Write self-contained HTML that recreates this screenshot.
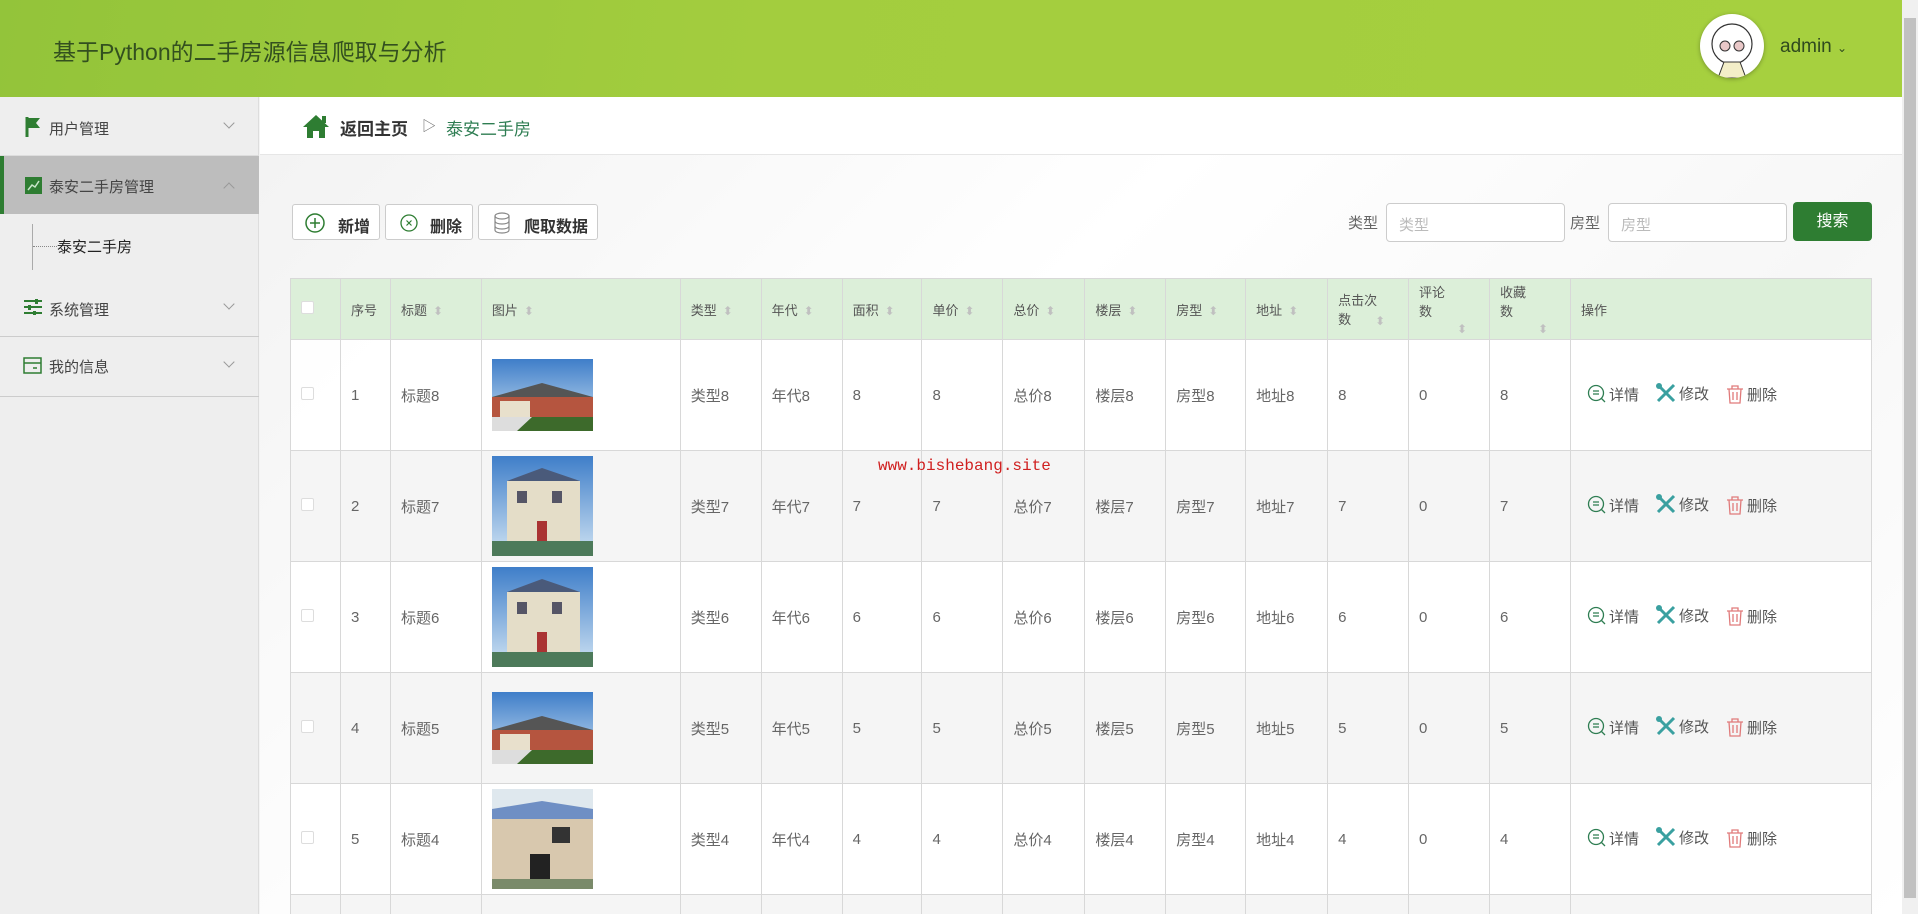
<!DOCTYPE html>
<html style="width:1918px;height:914px;overflow:hidden"><head><meta charset="utf-8">
<style>
*{margin:0;padding:0;box-sizing:border-box}
body{width:1918px;height:914px;overflow:hidden;font-family:"Liberation Sans","Noto Sans CJK SC",sans-serif;background:#f4f4f4;color:#606266}
#root{position:relative;width:1918px;height:914px;overflow:hidden}
.hdr{position:absolute;left:0;top:0;width:1902px;height:97px;background:linear-gradient(100deg,#93c43a 0%,#a3cd3e 40%,#a6d03f 100%)}
.hdr .t{position:absolute;left:53px;top:33px;font-size:23px;color:#33501f}
.av{position:absolute;left:1700px;top:14px;width:64px;height:64px;border-radius:50%;background:#fff;box-shadow:0 1px 4px rgba(0,0,0,.3);overflow:hidden}
.adm{position:absolute;left:1780px;top:36px;font-size:19px;color:#2f4a1e}
.sb{position:absolute;right:0;top:0;width:16px;height:914px;background:#f0f0f0}
.sb div{position:absolute;left:2px;top:18px;width:12px;height:880px;background:#c1c1c1}
.side{position:absolute;left:0;top:97px;width:259px;height:817px;background:#eeeeee;border-right:1px solid #ddd}
.mi{position:absolute;left:0;width:259px;font-size:15px;color:#444;}
.mi span{position:absolute;left:49px}
.mi .ar{position:absolute;left:225px;width:8px;height:8px;border-right:1px solid #999;border-bottom:1px solid #999;transform:rotate(45deg)}
.main{position:absolute;left:260px;top:97px;width:1642px;height:817px;background:linear-gradient(135deg,#f2f2f2,#fff 40%,#f7f7f7 70%,#fff)}
.bc{position:absolute;left:260px;top:97px;width:1642px;height:58px;background:#fff;border-bottom:1px solid #e6e6e6}
.btn{position:absolute;top:204px;height:36px;border:1px solid #ccc;border-radius:3px;background:#fff;font-size:16px;font-weight:bold;color:#333}
.inp{position:absolute;top:203px;height:39px;border:1px solid #ccc;border-radius:4px;background:#fff;font-size:15px;color:#bbb;padding:10px 12px}
.tw{position:absolute;left:290px;top:278px;width:1582px;height:636px;overflow:hidden}
table{border-collapse:collapse;font-size:15px;color:#666;table-layout:fixed}
td,th{border:1px solid #d8d8d8;padding:0 10px;text-align:left;vertical-align:middle}
th{height:61px;background:#dcefd9;font-weight:normal;font-size:13px;color:#555}
td{height:111px}
tr.g td{background:#f5f5f5}
tr.w td{background:rgba(255,255,255,.9)}
.s{display:inline-block;margin-left:6px;color:#c0c0c0;font-size:12px;vertical-align:middle}
.cb{display:inline-block;width:13px;height:13px;border:1px solid #ddd;border-radius:2px;background:#fff}
.act{font-size:15px;color:#555;white-space:nowrap}
.act i{font-style:normal;margin-right:16px;display:inline-flex;align-items:center;gap:2px}
</style></head><body><div id="root">
<div class="hdr"><div class="t">基于Python的二手房源信息爬取与分析</div>
<div class="av"><svg width="64" height="64"><circle cx="32" cy="30" r="20" fill="none" stroke="#333" stroke-width="1.2"/><circle cx="25" cy="32" r="5" fill="#e9c8c8" stroke="#333"/><circle cx="39" cy="32" r="5" fill="#e9c8c8" stroke="#333"/><path d="M18 64 L24 48 L40 48 L46 64Z" fill="#f3eec8" stroke="#333"/></svg></div>
<div class="adm">admin <span style="font-size:12px">&#8964;</span></div></div>
<div class="sb"><div></div></div>
<div class="side">
 <div class="mi" style="top:0;height:59px;border-bottom:1px solid #ddd"><svg style="position:absolute;left:25px;top:20px" width="16" height="20"><path d="M2 0V20" stroke="#2e7d32" stroke-width="3"/><path d="M3 1H15L11 6L15 11H3Z" fill="#2e7d32"/></svg><span style="top:21px">用户管理</span><b class="ar" style="top:22px"></b></div>
 <div class="mi" style="top:59px;height:58px;background:#bdbdbd;border-left:4px solid #2e7d32"><svg style="position:absolute;left:21px;top:21px" width="17" height="17"><rect width="17" height="17" fill="#2e7d32"/><path d="M3 13L7 8L10 10L14 4" stroke="#c8e6c9" stroke-width="1.5" fill="none"/></svg><span style="top:20px;left:45px">泰安二手房管理</span><b class="ar" style="top:28px;left:221px;transform:rotate(225deg)"></b></div>
 <div class="mi" style="top:117px;height:63px"><div style="position:absolute;left:32px;top:10px;width:1px;height:46px;background:#aaa"></div><div style="position:absolute;left:33px;top:32px;width:24px;border-top:1px dotted #888"></div><span style="top:22px;left:57px;color:#222">泰安二手房</span></div>
 <div class="mi" style="top:180px;height:60px;border-bottom:1px solid #ccc"><svg style="position:absolute;left:24px;top:22px" width="18" height="16"><path d="M0 2H18M0 8H18M0 14H18" stroke="#2e7d32" stroke-width="2"/><rect x="11" y="0" width="3" height="5" fill="#2e7d32"/><rect x="4" y="6" width="3" height="5" fill="#2e7d32"/><rect x="9" y="12" width="3" height="4" fill="#2e7d32"/></svg><span style="top:22px">系统管理</span><b class="ar" style="top:23px"></b></div>
 <div class="mi" style="top:240px;height:60px;border-bottom:1px solid #ccc"><svg style="position:absolute;left:23px;top:20px" width="19" height="17"><rect x="1" y="1" width="17" height="15" fill="none" stroke="#2e7d32" stroke-width="1.5"/><path d="M1 6H18" stroke="#2e7d32" stroke-width="1.5"/><path d="M10 11H14" stroke="#2e7d32" stroke-width="1.5"/></svg><span style="top:19px">我的信息</span><b class="ar" style="top:21px"></b></div>
</div>
<div class="main"></div>
<div class="bc"><svg style="position:absolute;left:42px;top:17px" width="28" height="24"><path d="M14 1L1 13H5V24H11V17H17V24H23V13H27Z" fill="#2e7d32"/><rect x="20" y="2" width="4" height="7" fill="#2e7d32"/></svg>
<span style="position:absolute;left:80px;top:18px;font-size:17px;font-weight:bold;color:#333">返回主页</span>
<span style="position:absolute;left:162px;top:19px;font-size:14px;color:#666">▷</span>
<span style="position:absolute;left:186px;top:18px;font-size:17px;color:#2e7d52">泰安二手房</span></div>

<div class="btn" style="left:292px;width:88px"><svg style="position:absolute;left:12px;top:8px" width="20" height="20"><circle cx="10" cy="10" r="9" fill="none" stroke="#2e7d32" stroke-width="1.5"/><path d="M10 5V15M5 10H15" stroke="#2e7d32" stroke-width="1.5"/></svg><span style="position:absolute;left:45px;top:8px">新增</span></div>
<div class="btn" style="left:385px;width:88px"><svg style="position:absolute;left:14px;top:9px" width="18" height="18"><circle cx="9" cy="9" r="8" fill="none" stroke="#2e7d32" stroke-width="1.3"/><path d="M6.5 6.5L11.5 11.5M11.5 6.5L6.5 11.5" stroke="#2e7d32" stroke-width="1.2"/></svg><span style="position:absolute;left:44px;top:8px">删除</span></div>
<div class="btn" style="left:478px;width:120px"><svg style="position:absolute;left:14px;top:7px" width="18" height="22"><ellipse cx="9" cy="4" rx="7" ry="3" fill="none" stroke="#888" stroke-width="1.2"/><path d="M2 4V18C2 22 16 22 16 18V4M2 9C2 13 16 13 16 9M2 14C2 18 16 18 16 14" fill="none" stroke="#888" stroke-width="1.2"/></svg><span style="position:absolute;left:45px;top:8px">爬取数据</span></div>

<span style="position:absolute;left:1348px;top:212px;font-size:15px;color:#666">类型</span>
<div class="inp" style="left:1386px;width:179px">类型</div>
<span style="position:absolute;left:1570px;top:212px;font-size:15px;color:#666">房型</span>
<div class="inp" style="left:1608px;width:179px">房型</div>
<div style="position:absolute;left:1793px;top:202px;width:79px;height:39px;background:#2e7d32;border-radius:4px;color:#fff;font-size:16px;text-align:center;line-height:39px">搜索</div>

<svg width="0" height="0" style="position:absolute"><defs>
<linearGradient id="sky" x1="0" y1="0" x2="0" y2="1"><stop offset="0" stop-color="#3f7ec9"/><stop offset="1" stop-color="#cfe3f3"/></linearGradient></defs></svg>
<div class="tw"><table>
<colgroup><col style="width:50px"><col style="width:50px"><col style="width:91px"><col style="width:199px"><col style="width:81px"><col style="width:81px"><col style="width:80px"><col style="width:81px"><col style="width:82px"><col style="width:81px"><col style="width:80px"><col style="width:82px"><col style="width:81px"><col style="width:81px"><col style="width:81px"><col style="width:301px"></colgroup>
<tr><th><span class="cb"></span></th><th>序号</th><th>标题<span class="s">⬍</span></th><th>图片<span class="s">⬍</span></th><th>类型<span class="s">⬍</span></th><th>年代<span class="s">⬍</span></th><th>面积<span class="s">⬍</span></th><th>单价<span class="s">⬍</span></th><th>总价<span class="s">⬍</span></th><th>楼层<span class="s">⬍</span></th><th>房型<span class="s">⬍</span></th><th>地址<span class="s">⬍</span></th><th>点击次<br>数<span class="s" style="margin-left:24px">⬍</span></th><th>评论<br>数<span class="s" style="margin-left:38px">⬍</span></th><th>收藏<br>数<span class="s" style="margin-left:38px">⬍</span></th><th>操作</th></tr>
<tbody id="tb"></tbody>
</table></div>
<div style="position:absolute;left:878px;top:457px;font-family:'Liberation Mono',monospace;font-size:16px;color:#d02020">www.bishebang.site</div>
<script>
var rows=[[1,8,'a'],[2,7,'b'],[3,6,'b'],[4,5,'a'],[5,4,'c'],[6,3,'a']];
var imgA='<svg width="101" height="72" style="display:block"><rect width="101" height="72" fill="url(#sky)"/><path d="M0 38L50 24L101 38Z" fill="#555"/><rect x="0" y="38" width="101" height="20" fill="#b5553f"/><rect x="8" y="42" width="30" height="16" fill="#e8e0cc"/><rect x="0" y="58" width="101" height="14" fill="#3d6a2b"/><path d="M0 58H40L25 72H0Z" fill="#ddd"/></svg>';
var imgB='<svg width="101" height="100" style="display:block"><rect width="101" height="100" fill="url(#sky)"/><path d="M15 25L50 12L88 25Z" fill="#4a5a7a"/><rect x="15" y="25" width="73" height="60" fill="#e4ddc8"/><rect x="25" y="35" width="10" height="12" fill="#556"/><rect x="60" y="35" width="10" height="12" fill="#556"/><rect x="45" y="65" width="10" height="20" fill="#a33"/><rect x="0" y="85" width="101" height="15" fill="#4d7a5a"/></svg>';
var imgC='<svg width="101" height="100" style="display:block"><rect width="101" height="100" fill="#dfe8ee"/><path d="M0 20L50 12L101 20V30H0Z" fill="#6f8fc4"/><rect x="0" y="30" width="101" height="60" fill="#d8c8ae"/><rect x="38" y="65" width="20" height="25" fill="#222"/><rect x="60" y="38" width="18" height="16" fill="#333"/><rect x="0" y="90" width="101" height="10" fill="#7a8a6a"/></svg>';
var h='';
rows.forEach(function(r,i){var n=r[1];var im=r[2]=='a'?imgA:(r[2]=='b'?imgB:imgC);
h+='<tr class="'+(i%2?'g':'w')+'"><td><span class="cb"></span></td><td>'+r[0]+'</td><td>标题'+n+'</td><td>'+im+'</td><td>类型'+n+'</td><td>年代'+n+'</td><td>'+n+'</td><td>'+n+'</td><td>总价'+n+'</td><td>楼层'+n+'</td><td>房型'+n+'</td><td>地址'+n+'</td><td>'+n+'</td><td>0</td><td>'+n+'</td><td class="act" style="padding-left:16px"><i><svg width="20" height="20"><circle cx="9" cy="9" r="7.5" fill="none" stroke="#2e7d52" stroke-width="1.3"/><path d="M6 7H12M6 10H12M14 14L18 18" stroke="#2e7d52" stroke-width="1.3"/></svg>详情</i><i><svg width="22" height="22"><path d="M3 3L19 19M19 3L3 19" stroke="#3aa0a0" stroke-width="3"/><circle cx="4" cy="4" r="3" fill="#3aa0a0"/></svg>修改</i><i><svg width="20" height="20"><path d="M2 5H18M7 5V2H13V5M4 5L5 19H15L16 5M8 8V16M12 8V16" fill="none" stroke="#e07a7a" stroke-width="1.3"/></svg>删除</i></td></tr>';});
document.getElementById('tb').innerHTML=h;
</script>
</div></body></html>
